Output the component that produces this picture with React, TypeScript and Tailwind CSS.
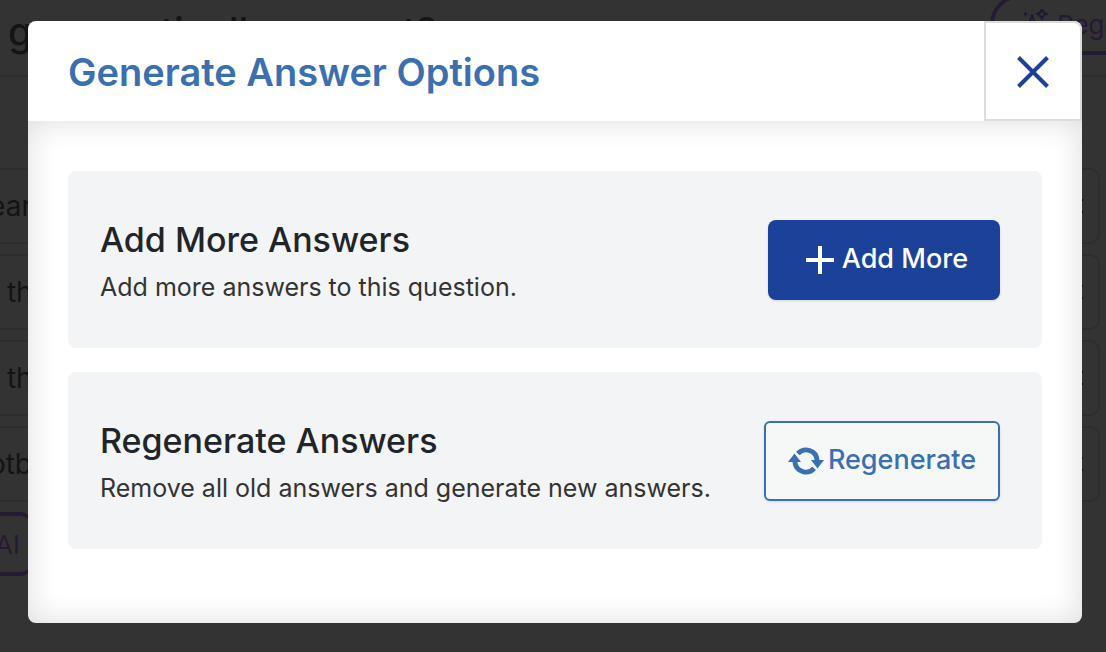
import { X } from "lucide-react";

const answers = [
  { id: 1, text: "the bears went to the river" },
  { id: 2, text: "When the team played, we won" },
  { id: 3, text: "When they played, it was late" },
  { id: 4, text: "To football practice we went" },
];

function SparklesIcon() {
  return (
    <svg viewBox="0 0 32 32" className="size-8 shrink-0 text-[#8a7cff]" fill="none" stroke="currentColor" strokeWidth="2" strokeLinejoin="round" aria-hidden="true">
      <path d="M10 6q2 10 10 12q-8 2-10 12q-2-10-10-12q8-2 10-12z" />
      <path d="M20 0q1 4 5 5q-4 1-5 5q-1-4-5-5q4-1 5-5z" />
      <path d="M3.500 2q.5 3 3 3q-2.500 0-3 3q-.5-3-3-3q2.500 0 3-3z" fill="currentColor" strokeWidth="0" />
    </svg>
  );
}

function RefreshIcon() {
  return (
    <svg viewBox="0 0 36 28" className="h-7 w-9 shrink-0" fill="currentColor" aria-hidden="true">
      <path d="M8 5A13.5 13.5 0 0 1 31.5 13H36L29.500 21.500 23 13H26.600A8.6 8.6 0 0 0 11.700 8.200Z" />
      <path d="M28 23A13.5 13.5 0 0 1 4.500 15H0L6.500 6.500 13 15H9.400A8.6 8.6 0 0 0 24.300 19.800Z" />
    </svg>
  );
}

function PlusIcon() {
  return (
    <svg viewBox="0 0 28 28" className="size-7 shrink-0" stroke="currentColor" strokeWidth="4" aria-hidden="true">
      <path d="M14 0v28M0 14h28" />
    </svg>
  );
}

function QuestionPage() {
  return (
    <div className="flex min-h-screen flex-col bg-white" aria-hidden="true">
      <div className="flex h-[77px] items-start justify-between border-b-2 border-[#dedede] pl-2">
        <h1 className="pt-2 text-[39px] leading-[48px] font-medium whitespace-nowrap text-[#666]">grammatically correct?</h1>
        <div className="-mt-[6px] -mr-[124px] flex h-[61px] shrink-0 items-center gap-[3px] rounded-full border-4 border-[#bb80ff] px-7 text-[26px] text-[#bb80ff]">
          <SparklesIcon />
          Regenerate
        </div>
      </div>
      <div className="-ml-24 flex flex-col gap-[10px] pt-[91px] pr-[6px]">
        {answers.map((answer) => (
          <div key={answer.id} className="flex h-[76px] items-center justify-between rounded-[10px] border-2 border-[#dedede] pr-[10px] pl-4 text-[28px] text-[#666]">
            {answer.text}
            <X className="size-6 text-black" />
          </div>
        ))}
        <div className="flex h-16 w-[132px] items-center justify-end rounded-2xl border-4 border-[#bb80ff] pr-3 text-[26px] text-[#cc80ff]">
          AI
        </div>
      </div>
    </div>
  );
}

export default function App() {
  return (
    <div className="relative h-screen overflow-hidden font-['Inter',sans-serif]">
      <QuestionPage />
      <div className="absolute inset-0 bg-black/80 pt-[21px] pr-6 pl-7">
        <div role="dialog" aria-modal="true" aria-labelledby="dialog-title" className="overflow-hidden rounded-lg bg-white">
          <header className="flex h-[100px] items-stretch justify-between">
            <h2 id="dialog-title" className="self-center pt-[2px] pl-10 text-[38px] leading-[48px] font-semibold text-[#3a70b0]">
              Generate Answer Options
            </h2>
            <button type="button" aria-label="Close" className="flex w-[98px] items-center justify-center rounded-tr-lg border-2 border-[#dcdcdc] pt-[2px] text-[#1b4298]">
              <svg viewBox="0 0 32 32" className="size-8" stroke="currentColor" strokeWidth="4" aria-hidden="true">
                <path d="M1.5 1.5l29 29M30.5 1.5l-29 29" />
              </svg>
            </button>
          </header>
          <div className="flex flex-col gap-6 px-10 pt-[50px] pb-[74px] shadow-[inset_0_0_30px_rgba(0,0,0,0.14)]">
            <section className="flex items-center justify-between rounded-lg bg-[#f3f4f6] py-[43px] pr-[42px] pl-8">
              <div>
                <h3 className="text-[34px] leading-[52px] font-medium text-[#1f2529]">Add More Answers</h3>
                <p className="mt-[3px] text-[25px] leading-[36px] text-[#333]">Add more answers to this question.</p>
              </div>
              <button type="button" className="flex h-20 shrink-0 items-center gap-2 rounded-lg bg-[#1b4298] pr-8 pl-[38px] text-[27px] font-medium text-white shadow-sm">
                <PlusIcon />
                Add More
              </button>
            </section>
            <section className="flex items-center justify-between rounded-lg bg-[#f3f4f6] py-[43px] pr-[42px] pl-8">
              <div>
                <h3 className="text-[34px] leading-[52px] font-medium text-[#1f2529]">Regenerate Answers</h3>
                <p className="mt-[3px] text-[25px] leading-[36px] text-[#333]">Remove all old answers and generate new answers.</p>
              </div>
              <button type="button" className="flex h-20 shrink-0 items-center gap-1 rounded-md border-2 border-[#3a70b0] bg-[#f6f8f8] px-[22px] text-[27px] font-medium text-[#3a70b0] shadow-sm">
                <RefreshIcon />
                Regenerate
              </button>
            </section>
          </div>
        </div>
      </div>
    </div>
  );
}
